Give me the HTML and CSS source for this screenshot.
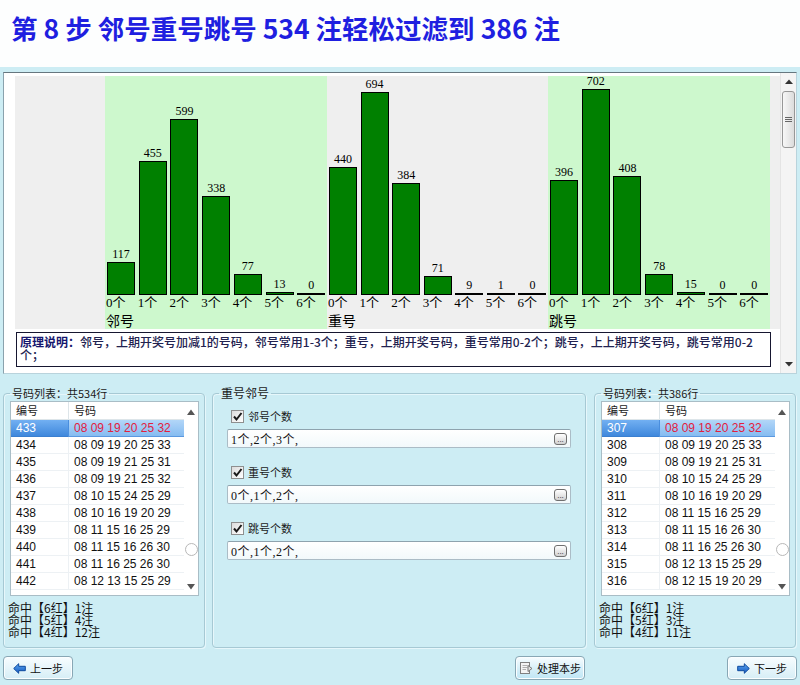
FILE: index.html
```html
<!DOCTYPE html>
<html lang="zh-CN">
<head>
<meta charset="utf-8">
<title>第 8 步 邻号重号跳号</title>
<link rel="stylesheet" href="styles.css">
</head>
<body>
<h1 class="title">第 8 步 邻号重号跳号 534 注轻松过滤到 386 注</h1>

<section class="chart-panel">
  <div class="chart-main">
    <div class="chart">
      <div class="chart-pad-left"></div>

      <div class="zone green">
        <div class="bars">
          <div class="bar-col"><span class="val">117</span><div class="bar" style="height:33px"></div></div>
          <div class="bar-col"><span class="val">455</span><div class="bar" style="height:134px"></div></div>
          <div class="bar-col"><span class="val">599</span><div class="bar" style="height:176px"></div></div>
          <div class="bar-col"><span class="val">338</span><div class="bar" style="height:99px"></div></div>
          <div class="bar-col"><span class="val">77</span><div class="bar" style="height:21px"></div></div>
          <div class="bar-col"><span class="val">13</span><div class="bar" style="height:3px"></div></div>
          <div class="bar-col"><span class="val">0</span><div class="bar" style="height:2px"></div></div>
        </div>
        <div class="ticks"><span>0个</span><span>1个</span><span>2个</span><span>3个</span><span>4个</span><span>5个</span><span>6个</span></div>
        <div class="zone-label">邻号</div>
      </div>

      <div class="zone mid">
        <div class="bars">
          <div class="bar-col"><span class="val">440</span><div class="bar" style="height:128px"></div></div>
          <div class="bar-col"><span class="val">694</span><div class="bar" style="height:203px"></div></div>
          <div class="bar-col"><span class="val">384</span><div class="bar" style="height:112px"></div></div>
          <div class="bar-col"><span class="val">71</span><div class="bar" style="height:19px"></div></div>
          <div class="bar-col"><span class="val">9</span><div class="bar" style="height:2px"></div></div>
          <div class="bar-col"><span class="val">1</span><div class="bar" style="height:2px"></div></div>
          <div class="bar-col"><span class="val">0</span><div class="bar" style="height:2px"></div></div>
        </div>
        <div class="ticks"><span>0个</span><span>1个</span><span>2个</span><span>3个</span><span>4个</span><span>5个</span><span>6个</span></div>
        <div class="zone-label">重号</div>
      </div>

      <div class="zone green">
        <div class="bars">
          <div class="bar-col"><span class="val">396</span><div class="bar" style="height:115px"></div></div>
          <div class="bar-col"><span class="val">702</span><div class="bar" style="height:206px"></div></div>
          <div class="bar-col"><span class="val">408</span><div class="bar" style="height:119px"></div></div>
          <div class="bar-col"><span class="val">78</span><div class="bar" style="height:21px"></div></div>
          <div class="bar-col"><span class="val">15</span><div class="bar" style="height:3px"></div></div>
          <div class="bar-col"><span class="val">0</span><div class="bar" style="height:2px"></div></div>
          <div class="bar-col"><span class="val">0</span><div class="bar" style="height:2px"></div></div>
        </div>
        <div class="ticks"><span>0个</span><span>1个</span><span>2个</span><span>3个</span><span>4个</span><span>5个</span><span>6个</span></div>
        <div class="zone-label">跳号</div>
      </div>

      <div class="chart-pad-right"></div>
    </div>
    <div class="note"><b>原理说明：</b><span>邻号，上期开奖号加减1的号码，邻号常用1-3个；重号，上期开奖号码，重号常用0-2个；跳号，上上期开奖号码，跳号常用0-2个；</span></div>
  </div>
  <div class="vscroll">
    <div class="vs-up"><svg width="8" height="5" viewBox="0 0 8 5"><path d="M0 5 L4 0.5 L8 5 Z" fill="#333"/></svg></div>
    <div class="vs-thumb"><svg width="7" height="6" viewBox="0 0 7 6"><path d="M0 0.5H7M0 2.5H7M0 4.5H7" stroke="#666" stroke-width="1"/></svg></div>
    <div class="vs-track"></div>
    <div class="vs-down"><svg width="8" height="5" viewBox="0 0 8 5"><path d="M0 0 L4 4.5 L8 0 Z" fill="#333"/></svg></div>
  </div>
</section>

<section class="lower">
  <fieldset class="list-group">
    <legend>号码列表：共534行</legend>
    <div class="list">
      <div class="list-table">
        <div class="list-head"><span>编号</span><span>号码</span></div>
        <div class="row sel"><span class="c1">433</span><span class="c2">08 09 19 20 25 32</span></div>
        <div class="row"><span class="c1">434</span><span class="c2">08 09 19 20 25 33</span></div>
        <div class="row"><span class="c1">435</span><span class="c2">08 09 19 21 25 31</span></div>
        <div class="row"><span class="c1">436</span><span class="c2">08 09 19 21 25 32</span></div>
        <div class="row"><span class="c1">437</span><span class="c2">08 10 15 24 25 29</span></div>
        <div class="row"><span class="c1">438</span><span class="c2">08 10 16 19 20 29</span></div>
        <div class="row"><span class="c1">439</span><span class="c2">08 11 15 16 25 29</span></div>
        <div class="row"><span class="c1">440</span><span class="c2">08 11 15 16 26 30</span></div>
        <div class="row"><span class="c1">441</span><span class="c2">08 11 16 25 26 30</span></div>
        <div class="row"><span class="c1">442</span><span class="c2">08 12 13 15 25 29</span></div>
      </div>
      <div class="list-scroll">
        <div class="ls-up"><svg width="8" height="6" viewBox="0 0 8 6"><path d="M0 6 L4 0.5 L8 6 Z" fill="#555"/></svg></div>
        <div class="ls-thumb"></div>
        <div class="ls-down"><svg width="8" height="6" viewBox="0 0 8 6"><path d="M0 0 L4 5.5 L8 0 Z" fill="#555"/></svg></div>
      </div>
    </div>
    <div class="hits">
      <div>命中【6红】1注</div>
      <div>命中【5红】4注</div>
      <div>命中【4红】12注</div>
    </div>
  </fieldset>

  <fieldset class="filter-group">
    <legend>重号邻号</legend>
    <div class="opt first"><span class="cb"><svg width="11" height="11" viewBox="0 0 11 11"><path d="M2 5.5 L4.5 8.5 L9.5 2" fill="none" stroke="#1a1a1a" stroke-width="2"/></svg></span><span>邻号个数</span></div>
    <div class="field"><span class="txt">1个,2个,3个,</span><span class="ellip">...</span></div>
    <div class="opt"><span class="cb"><svg width="11" height="11" viewBox="0 0 11 11"><path d="M2 5.5 L4.5 8.5 L9.5 2" fill="none" stroke="#1a1a1a" stroke-width="2"/></svg></span><span>重号个数</span></div>
    <div class="field"><span class="txt">0个,1个,2个,</span><span class="ellip">...</span></div>
    <div class="opt"><span class="cb"><svg width="11" height="11" viewBox="0 0 11 11"><path d="M2 5.5 L4.5 8.5 L9.5 2" fill="none" stroke="#1a1a1a" stroke-width="2"/></svg></span><span>跳号个数</span></div>
    <div class="field"><span class="txt">0个,1个,2个,</span><span class="ellip">...</span></div>
  </fieldset>

  <fieldset class="list-group right">
    <legend>号码列表：共386行</legend>
    <div class="list">
      <div class="list-table">
        <div class="list-head"><span>编号</span><span>号码</span></div>
        <div class="row sel"><span class="c1">307</span><span class="c2">08 09 19 20 25 32</span></div>
        <div class="row"><span class="c1">308</span><span class="c2">08 09 19 20 25 33</span></div>
        <div class="row"><span class="c1">309</span><span class="c2">08 09 19 21 25 31</span></div>
        <div class="row"><span class="c1">310</span><span class="c2">08 10 15 24 25 29</span></div>
        <div class="row"><span class="c1">311</span><span class="c2">08 10 16 19 20 29</span></div>
        <div class="row"><span class="c1">312</span><span class="c2">08 11 15 16 25 29</span></div>
        <div class="row"><span class="c1">313</span><span class="c2">08 11 15 16 26 30</span></div>
        <div class="row"><span class="c1">314</span><span class="c2">08 11 16 25 26 30</span></div>
        <div class="row"><span class="c1">315</span><span class="c2">08 12 13 15 25 29</span></div>
        <div class="row"><span class="c1">316</span><span class="c2">08 12 15 19 20 29</span></div>
      </div>
      <div class="list-scroll">
        <div class="ls-up"><svg width="8" height="6" viewBox="0 0 8 6"><path d="M0 6 L4 0.5 L8 6 Z" fill="#555"/></svg></div>
        <div class="ls-thumb"></div>
        <div class="ls-down"><svg width="8" height="6" viewBox="0 0 8 6"><path d="M0 0 L4 5.5 L8 0 Z" fill="#555"/></svg></div>
      </div>
    </div>
    <div class="hits">
      <div>命中【6红】1注</div>
      <div>命中【5红】3注</div>
      <div>命中【4红】11注</div>
    </div>
  </fieldset>
</section>

<footer class="footer">
  <button class="btn prev" type="button">
    <svg width="13" height="11" viewBox="0 0 13 11"><defs><linearGradient id="ab1" x1="0" y1="0" x2="0" y2="1"><stop offset="0" stop-color="#5aa6f0"/><stop offset="1" stop-color="#1458c0"/></linearGradient></defs><path d="M0.7 5.5 L5.7 0.7 V3.3 H12.3 V7.7 H5.7 V10.3 Z" fill="url(#ab1)" stroke="#0e4a9e" stroke-width="1" stroke-linejoin="round"/></svg>
    <span>上一步</span>
  </button>
  <button class="btn process" type="button">
    <svg width="14" height="14" viewBox="0 0 14 14"><rect x="1.5" y="1.5" width="9" height="11" fill="#f4f4f4" stroke="#808080"/><path d="M3.5 4.5H8.5M3.5 6.5H8.5M3.5 8.5H7" stroke="#b0b0b0"/><path d="M9 4.5 L13 7.5 L9 10.5 Z" fill="#e6e6e6" stroke="#7a7a7a" stroke-linejoin="round"/></svg>
    <span>处理本步</span>
  </button>
  <button class="btn next" type="button">
    <svg width="13" height="11" viewBox="0 0 13 11"><defs><linearGradient id="ab2" x1="0" y1="0" x2="0" y2="1"><stop offset="0" stop-color="#5aa6f0"/><stop offset="1" stop-color="#1458c0"/></linearGradient></defs><path d="M12.3 5.5 L7.3 0.7 V3.3 H0.7 V7.7 H7.3 V10.3 Z" fill="url(#ab2)" stroke="#0e4a9e" stroke-width="1" stroke-linejoin="round"/></svg>
    <span>下一步</span>
  </button>
</footer>
</body>
</html>
```

FILE: styles.css
```css
* { box-sizing: border-box; }
html, body { margin: 0; padding: 0; }
body {
  width: 800px;
  height: 685px;
  overflow: hidden;
  background: #cdedf4;
  font-family: "Noto Sans CJK SC", sans-serif;
  color: #111;
}

.title {
  margin: 0;
  height: 67px;
  padding-left: 11px;
  background: #fdfefe;
  font-size: 26.5px;
  line-height: 56px;
  font-weight: 700;
  color: #1f1fe0;
  white-space: nowrap;
}

/* chart panel */
.chart-panel {
  display: flex;
  height: 302px;
  margin: 5px 3px 0;
  padding: 3px 0 0 11px;
  border: 1px solid;
  border-color: #66777f #b9d3dc #b9d3dc #8aa2ad;
  background: #fff;
}
.chart-main {
  width: 765px;
  display: flex;
  flex-direction: column;
}
.chart {
  display: flex;
  height: 253px;
  background: #efefef;
}
.chart-pad-left { width: 90px; }
.chart-pad-right { flex: 1; }
.zone {
  width: 222px;
  display: flex;
  flex-direction: column;
}
.zone.mid { width: 221px; }
.zone.green { background: #cdf8cd; }
.bars {
  height: 219px;
  display: grid;
  grid-template-columns: repeat(7, 1fr);
  align-items: end;
}
.bar-col {
  justify-self: start;
  width: 28px;
  margin-left: 2px;
  display: flex;
  flex-direction: column;
  align-items: center;
}
.val {
  font-family: "Liberation Serif", serif;
  font-size: 12px;
  line-height: 11px;
  margin-bottom: 2px;
  color: #000;
}
.bar {
  width: 28px;
  background: #008000;
  border: 1px solid #000;
}
.ticks {
  display: grid;
  grid-template-columns: repeat(7, 1fr);
  height: 16px;
  font-family: "Liberation Serif", "Noto Sans CJK SC", serif;
  font-size: 13px;
  line-height: 16px;
  color: #000;
}
.ticks span { padding-left: 1px; }
.zone-label {
  height: 18px;
  padding-left: 1px;
  font-size: 14px;
  line-height: 18px;
  color: #000;
}
.note {
  margin: 3px 0 0 1px;
  width: 755px;
  height: 35px;
  padding: 2px 3px;
  border: 1px solid #161630;
  font-size: 12px;
  line-height: 13px;
  color: #222250;
}
.note b { font-weight: 700; color: #16166e; }
.note span { font-weight: 500; }

.vscroll {
  width: 16px;
  margin-top: -3px;
  display: flex;
  flex-direction: column;
  align-items: center;
  background: #f4f4f4;
  border-left: 1px solid #e4e4e4;
}
.vs-up, .vs-down {
  height: 17px;
  display: flex;
  align-items: center;
  justify-content: center;
}
.vs-thumb {
  width: 13px;
  height: 57px;
  margin-top: 1px;
  border: 1px solid #979797;
  border-radius: 3px;
  background: linear-gradient(90deg, #f7f7f7, #dcdcdc);
  display: flex;
  align-items: center;
  justify-content: center;
}
.vs-track { flex: 1; }

/* lower area */
.lower {
  display: flex;
  height: 274px;
  padding: 12px 3px 0;
}
fieldset {
  margin: 0;
  min-width: 0;
  height: 262px;
  border: 1px solid #a6c9d4;
  border-radius: 4px;
  box-shadow: inset 1px 1px 0 #e6f7fb, 1px 1px 0 #e6f7fb;
}
legend {
  font-size: 11px;
  line-height: 14px;
  padding: 0 2px;
  color: #1a1a1a;
}
.list-group {
  width: 202px;
  padding: 0 5px 0 6px;
}
.list-group.right { margin-left: 8px; }
.filter-group {
  width: 374px;
  margin-left: 7px;
  padding: 0 14px;
}
.filter-group legend { margin-left: -8px; font-size: 12px; }

.list {
  margin-top: 1px;
  width: 189px;
  height: 195px;
  border: 1px solid #a9bdc6;
  background: #fff;
  display: flex;
}
.list-table { flex: 1; }
.list-head {
  display: grid;
  grid-template-columns: 57px 1fr;
  height: 18px;
  border-bottom: 1px solid #dde5e9;
  font-size: 11px;
  line-height: 17px;
  color: #222;
}
.list-head span { padding-left: 5px; }
.list-head span + span { border-left: 1px solid #dde5e9; }
.row {
  display: grid;
  grid-template-columns: 57px 1fr;
  height: 17px;
  font-family: "Liberation Sans", sans-serif;
  font-size: 12px;
  line-height: 16px;
  color: #111;
}
.row span { border-bottom: 1px solid #edf1f4; padding-left: 5px; }
.row .c2 { border-left: 1px solid #edf1f4; }
.row.sel .c1 {
  background: linear-gradient(#72b0f2, #3f88dc);
  color: #fff;
  border-bottom-color: #3a7fd0;
}
.row.sel .c2 {
  background: linear-gradient(#b2d6f8, #86bcf1);
  color: #e3203e;
  border-left-color: #4a8ede;
  border-bottom-color: #5a98e0;
}
.list-scroll {
  width: 14px;
  display: flex;
  flex-direction: column;
  align-items: center;
}
.ls-up { height: 20px; display: flex; align-items: center; justify-content: center; }
.ls-thumb {
  width: 13px;
  height: 13px;
  margin-top: 121px;
  border: 1px solid #b8b8b8;
  border-radius: 50%;
  background: #fff;
}
.ls-down { height: 17px; margin-top: 22px; display: flex; align-items: center; justify-content: center; }

.hits {
  margin: 6px 0 0 -2px;
  font-size: 12px;
  line-height: 12px;
  color: #111;
}

/* filter options */
.opt {
  display: flex;
  align-items: center;
  gap: 4px;
  height: 14px;
  margin-top: 17px;
  padding-left: 4px;
  font-size: 11px;
  color: #1a1a1a;
}
.opt.first { margin-top: 9px; }
.cb {
  width: 13px;
  height: 13px;
  border: 1px solid #8e8f8f;
  background: linear-gradient(135deg, #dcdcdc, #fff);
  display: flex;
  align-items: center;
  justify-content: center;
}
.field {
  margin-top: 6px;
  height: 19px;
  display: flex;
  align-items: center;
  padding: 0 3px;
  border: 1px solid #abbcc6;
  border-top-color: #8ea3ae;
  border-radius: 2px;
  background: linear-gradient(#fff, #f2f9fb);
  font-family: "Liberation Serif", "Noto Sans CJK SC", serif;
  font-size: 12px;
  letter-spacing: 0.5px;
  color: #111;
}
.field .txt { flex: 1; }
.ellip {
  width: 13px;
  height: 12px;
  border: 1px solid #6f6f6f;
  border-radius: 3px;
  background: linear-gradient(#fff, #d2d2d2);
  font-family: "Liberation Sans", sans-serif;
  font-size: 8px;
  line-height: 12px;
  letter-spacing: 0;
  text-align: center;
  color: #222;
}

/* footer */
.footer {
  display: flex;
  padding: 8px 3px 0;
}
.btn {
  width: 70px;
  height: 24px;
  padding: 0;
  display: flex;
  align-items: center;
  justify-content: center;
  gap: 4px;
  border: 1px solid #88a7b5;
  border-radius: 4px;
  background: linear-gradient(#f8fdff, #d6eef6);
  box-shadow: inset 0 0 0 1px #fbfeff;
  font-family: "Noto Sans CJK SC", sans-serif;
  font-size: 11px;
  color: #111;
}
.btn.process {
  margin-left: auto;
  margin-right: 142px;
  background: linear-gradient(#f8fdff, #d3eef8 60%, #bfe6f5);
}
```
